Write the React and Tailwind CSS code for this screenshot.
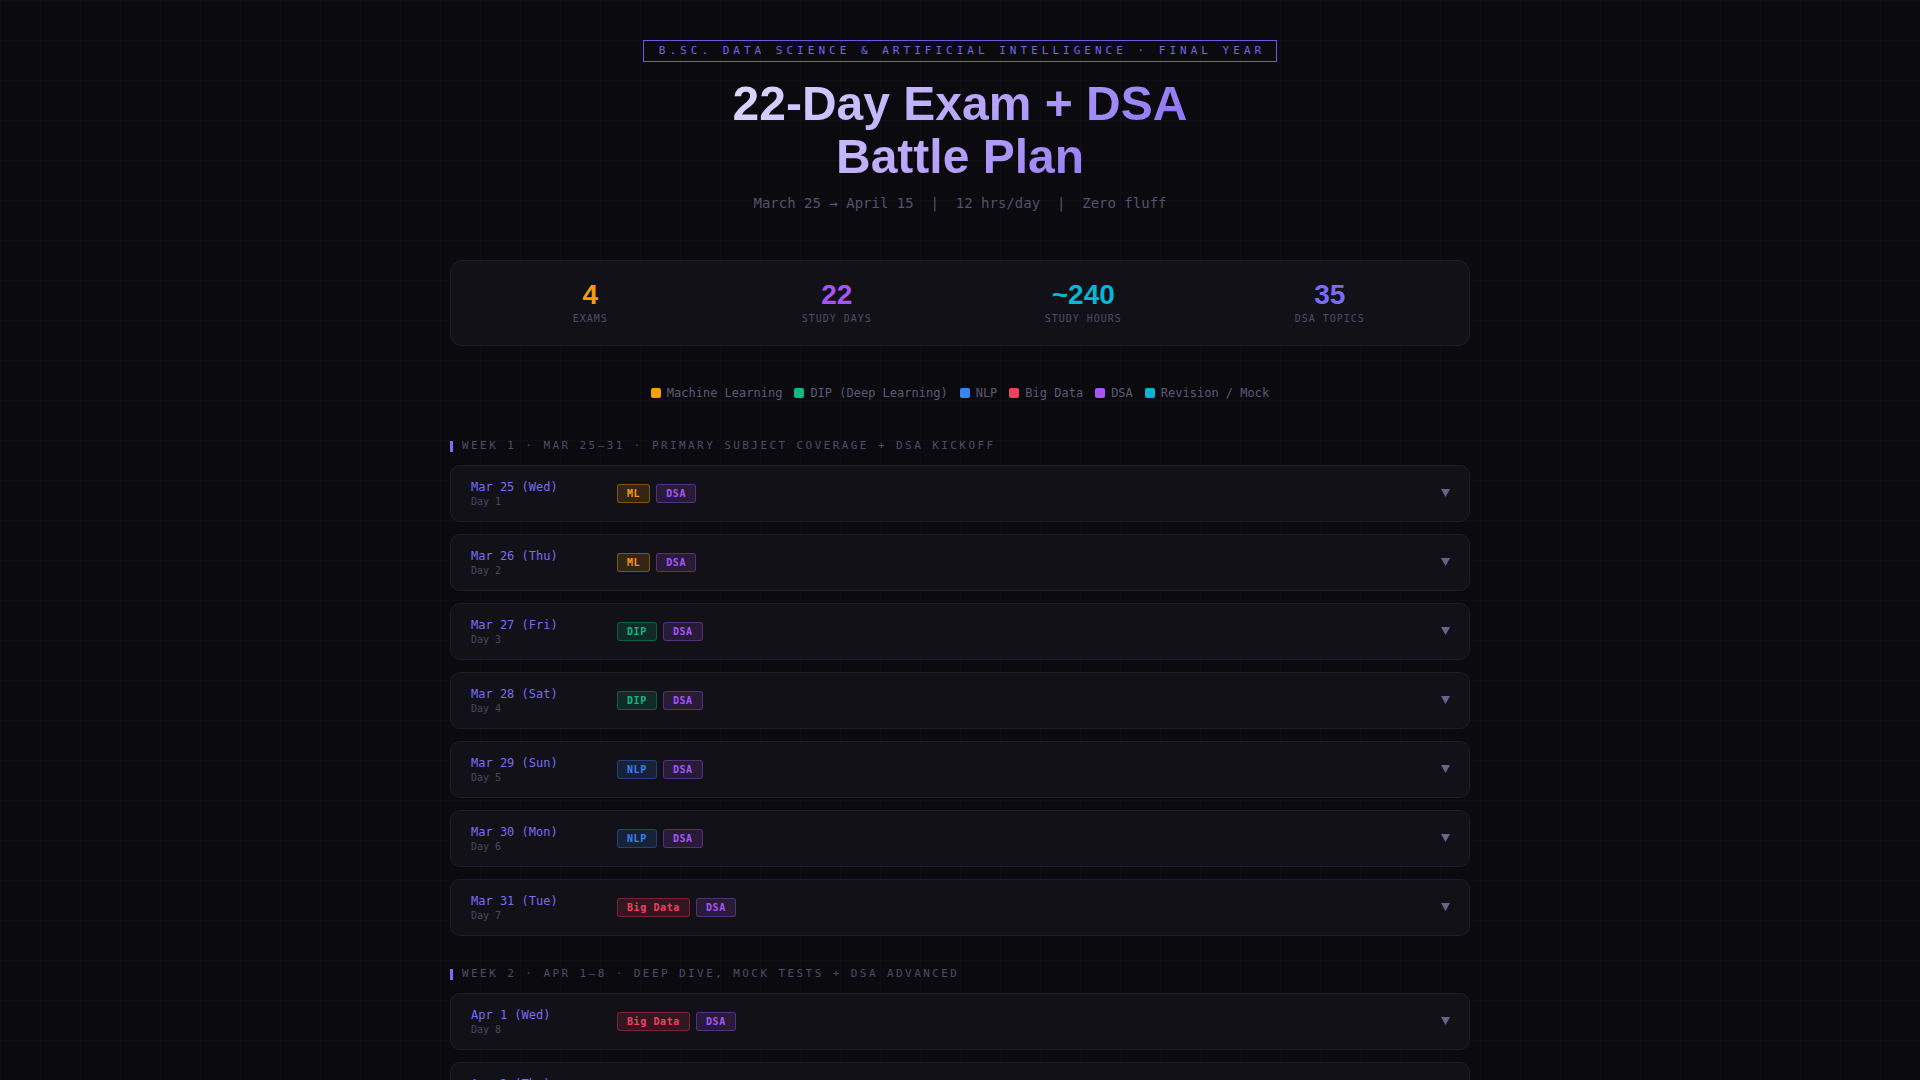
const tagStyles = {
  ML: "text-[#f59e0b] bg-[#f59e0b]/15 border-[#f59e0b]/40",
  DSA: "text-[#a855f7] bg-[#a855f7]/15 border-[#a855f7]/35",
  DIP: "text-[#10b981] bg-[#10b981]/15 border-[#10b981]/35",
  NLP: "text-[#3b82f6] bg-[#3b82f6]/15 border-[#3b82f6]/35",
  "Big Data": "text-[#f43f5e] bg-[#f43f5e]/15 border-[#f43f5e]/35",
  Mock: "text-[#06b6d4] bg-[#06b6d4]/15 border-[#06b6d4]/35",
};

const stats = [
  { value: "4", label: "EXAMS", color: "text-[#f59e0b]" },
  { value: "22", label: "STUDY DAYS", color: "text-[#a855f7]" },
  { value: "~240", label: "STUDY HOURS", color: "text-[#06b6d4]" },
  { value: "35", label: "DSA TOPICS", color: "text-[#7b6cf6]" },
];

const legend = [
  { label: "Machine Learning", color: "bg-[#f59e0b]" },
  { label: "DIP (Deep Learning)", color: "bg-[#10b981]" },
  { label: "NLP", color: "bg-[#3b82f6]" },
  { label: "Big Data", color: "bg-[#f43f5e]" },
  { label: "DSA", color: "bg-[#a855f7]" },
  { label: "Revision / Mock", color: "bg-[#06b6d4]" },
];

const weeks = [
  {
    title: "WEEK 1 · MAR 25–31 · PRIMARY SUBJECT COVERAGE + DSA KICKOFF",
    days: [
      { date: "Mar 25 (Wed)", day: 1, tags: ["ML", "DSA"] },
      { date: "Mar 26 (Thu)", day: 2, tags: ["ML", "DSA"] },
      { date: "Mar 27 (Fri)", day: 3, tags: ["DIP", "DSA"] },
      { date: "Mar 28 (Sat)", day: 4, tags: ["DIP", "DSA"] },
      { date: "Mar 29 (Sun)", day: 5, tags: ["NLP", "DSA"] },
      { date: "Mar 30 (Mon)", day: 6, tags: ["NLP", "DSA"] },
      { date: "Mar 31 (Tue)", day: 7, tags: ["Big Data", "DSA"] },
    ],
  },
  {
    title: "WEEK 2 · APR 1–8 · DEEP DIVE, MOCK TESTS + DSA ADVANCED",
    days: [
      { date: "Apr 1 (Wed)", day: 8, tags: ["Big Data", "DSA"] },
      { date: "Apr 2 (Thu)", day: 9, tags: ["ML", "DSA"] },
      { date: "Apr 3 (Fri)", day: 10, tags: ["DIP", "DSA"] },
      { date: "Apr 4 (Sat)", day: 11, tags: ["NLP", "DSA"] },
    ],
  },
];

const Tag = ({ name }) => (
  <span
    className={`inline-flex h-[19px] items-center rounded-[3px] border px-[9px] text-[10px] font-bold tracking-[0.6px] ${tagStyles[name]}`}
  >
    {name}
  </span>
);

const DayRow = ({ date, day, tags }) => (
  <div className="flex h-[57px] items-center rounded-[10px] border border-[#1e1e2a] bg-[#111117] pl-[20px] pr-[19px]">
    <div className="mt-[2px] flex w-[146px] flex-col">
      <span className="text-[12px] leading-[16px] text-[#7b6cf6]">{date}</span>
      <span className="text-[10px] leading-[14px] text-[#4b4962]">Day {day}</span>
    </div>
    <div className="flex gap-[6px]">
      {tags.map((t) => (
        <Tag key={t} name={t} />
      ))}
    </div>
    <svg className="ml-auto" width="9" height="8" viewBox="0 0 9 8">
      <polygon points="0,0 9,0 4.5,8" fill="#67648a" />
    </svg>
  </div>
);

export default function App() {
  return (
    <div className="min-h-screen bg-[#0a0a0f] bg-[linear-gradient(rgba(139,120,246,0.035)_1px,transparent_1px),linear-gradient(90deg,rgba(139,120,246,0.035)_1px,transparent_1px)] bg-[size:40px_40px] font-['DejaVu_Sans_Mono',monospace]">
      <div className="mx-auto w-[1020px] pt-[40px] pb-[60px]">
        {/* header */}
        <div className="flex flex-col items-center text-center">
          <div className="flex h-[22px] items-center border border-[#6a5ae6] pl-[15px] pr-[11px] text-[11px] tracking-[0.365em] text-[#7466ee]">
            B.SC. DATA SCIENCE &amp; ARTIFICIAL INTELLIGENCE · FINAL YEAR
          </div>
          <h1 className="mt-[16px] w-fit bg-linear-135 from-[#e0d9ff] via-[#b7a4fb] to-[#8466f1] bg-clip-text font-['Liberation_Sans',Arial,sans-serif] text-[48px] font-bold leading-[1.1] text-transparent">
            22-Day Exam + DSA
            <br />
            Battle Plan
          </h1>
          <p className="mt-[9px] whitespace-pre text-[14px] leading-[20px] text-[#55536b]">
            {"March 25 → April 15  |  12 hrs/day  |  Zero fluff"}
          </p>
        </div>

        {/* stats */}
        <div className="mt-[47px] grid grid-cols-4 rounded-[12px] border border-[#1e1e2a] bg-[#111117] px-[16px] py-[20px]">
          {stats.map((s) => (
            <div key={s.label} className="flex flex-col items-center">
              <span
                className={`font-['Liberation_Sans',Arial,sans-serif] text-[28px] font-bold leading-none ${s.color}`}
              >
                {s.value}
              </span>
              <span className="mt-[4px] text-[10px] leading-[12px] tracking-[1px] text-[#4f4d66]">
                {s.label}
              </span>
            </div>
          ))}
        </div>

        {/* legend */}
        <div className="mt-[38px] flex justify-center gap-[12px]">
          {legend.map((l) => (
            <div key={l.label} className="flex items-center gap-[6px] text-[12px] leading-[18px] text-[#5d5b74]">
              <span className={`h-[10px] w-[10px] rounded-[2px] ${l.color}`} />
              {l.label}
            </div>
          ))}
        </div>

        {/* weeks */}
        <div className="mt-[36px] flex flex-col gap-[30px]">
          {weeks.map((w) => (
            <div key={w.title}>
              <div className="mb-[12px] flex h-[15px] items-end gap-[9px]">
                <span className="mb-[1px] h-[11px] w-[3px] bg-[#7b6cf6]" />
                <span className="text-[11px] leading-[14px] tracking-[0.22em] text-[#4f4d66]">
                  {w.title}
                </span>
              </div>
              <div className="flex flex-col gap-[12px]">
                {w.days.map((d) => (
                  <DayRow key={d.date} {...d} />
                ))}
              </div>
            </div>
          ))}
        </div>
      </div>
    </div>
  );
}
